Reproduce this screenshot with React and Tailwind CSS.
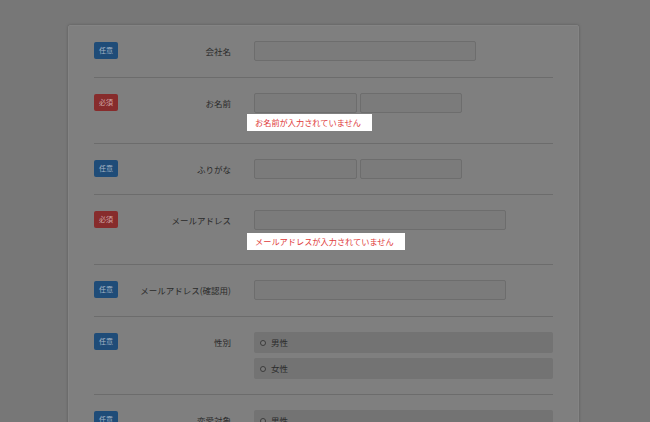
const fontStack = { fontFamily: '"Noto Sans CJK JP", "Noto Sans", sans-serif' }

function Badge({ required }) {
  return (
    <span
      className={`flex h-[17px] w-[24px] shrink-0 items-center justify-center rounded-[2px] text-[7px] leading-none ${
        required ? 'bg-[#872c2c] text-[#cfa6a6]' : 'bg-[#1f4c78] text-[#a5b4c4]'
      }`}
    >
      {required ? '必須' : '任意'}
    </span>
  )
}

function Input({ w }) {
  return <div className={`h-[20px] ${w} rounded-[2px] border border-[#6d6d6d] bg-[#7b7b7b]`} />
}

function ErrorTip({ text, mt }) {
  return (
    <div
      className={`${mt} -ml-[7px] flex h-[17px] w-fit items-center whitespace-nowrap bg-white pl-[8px] pr-[11px] text-[8.2px] leading-none text-[#e03a3a]`}
    >
      {text}
    </div>
  )
}

function Option({ label }) {
  return (
    <div className="flex h-[21px] items-center gap-[5px] rounded-[2px] bg-[#737373] pl-[6px] text-[8.5px] leading-none text-[#2c2c2c]">
      <span className="h-[6px] w-[6px] rounded-full border border-[#3c3c3c] bg-[#7a7a7a]" />
      {label}
    </div>
  )
}

function Row({ required, label, children, pb = 'pb-[16px]', last }) {
  return (
    <div className={`flex items-start pt-[15px] ${pb} ${last ? '' : 'border-b border-[#6c6c6c]'}`}>
      <div className="pt-[1px]">
        <Badge required={required} />
      </div>
      <div className="flex h-[20px] w-[113px] shrink-0 items-center justify-end whitespace-nowrap text-[8.5px] leading-none text-[#2a2a2a]">
        {label}
      </div>
      <div className="ml-[23px] flex flex-1 flex-col">{children}</div>
    </div>
  )
}

export default function App() {
  return (
    <div className="h-[422px] overflow-hidden bg-[#777777] pt-[25px]" style={fontStack}>
      <div className="ml-[68px] w-[511px] rounded-[2px] border border-[#848484] bg-[#7f7f7f] px-[25px] shadow-[0_0_3px_rgba(0,0,0,0.25)]">
        <Row label="会社名">
          <Input w="w-[222px]" />
        </Row>
        <Row required label="お名前" pb="pb-[12px]">
          <div className="flex gap-[3px]">
            <Input w="w-[103px]" />
            <Input w="w-[102px]" />
          </div>
          <ErrorTip text="お名前が入力されていません" mt="mt-[1px]" />
        </Row>
        <Row label="ふりがな" pb="pb-[15px]">
          <div className="flex gap-[3px]">
            <Input w="w-[103px]" />
            <Input w="w-[102px]" />
          </div>
        </Row>
        <Row required label="メールアドレス" pb="pb-[14px]">
          <Input w="w-[252px]" />
          <ErrorTip text="メールアドレスが入力されていません" mt="mt-[3px]" />
        </Row>
        <Row label="メールアドレス(確認用)">
          <Input w="w-[252px]" />
        </Row>
        <Row label="性別" pb="pb-[15px]">
          <div className="flex flex-col gap-[5px]">
            <Option label="男性" />
            <Option label="女性" />
          </div>
        </Row>
        <Row label="恋愛対象" last>
          <div className="flex flex-col gap-[5px]">
            <Option label="男性" />
            <Option label="女性" />
          </div>
        </Row>
      </div>
    </div>
  )
}
